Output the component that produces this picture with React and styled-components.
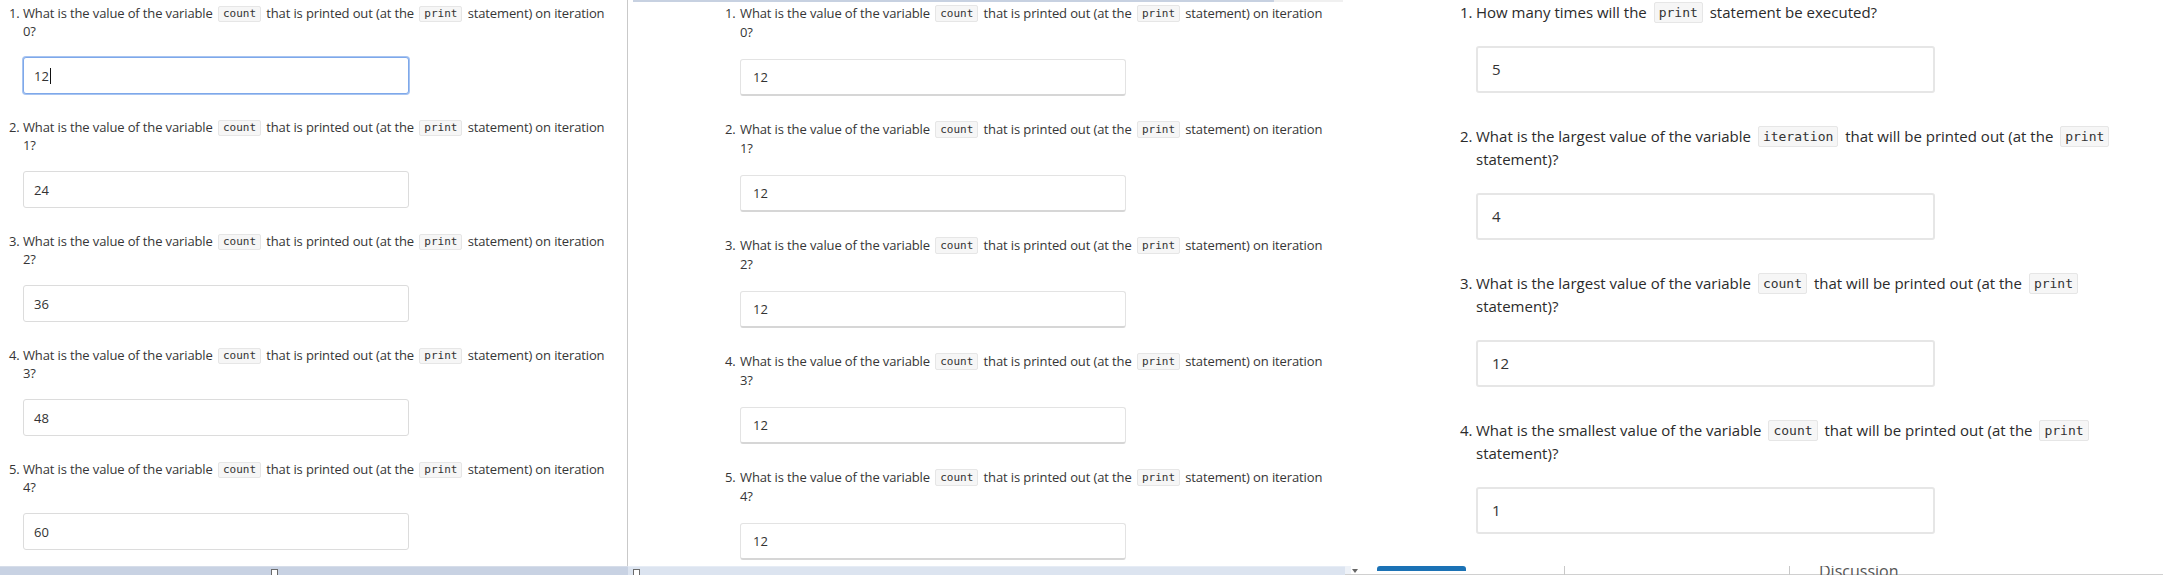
import React from 'react';
import styled, { createGlobalStyle, css } from 'styled-components';

const Global = createGlobalStyle`
  html, body { margin: 0; padding: 0; background: #fff; }
  body {
    width: 2163px; height: 575px; overflow: hidden;
    font-family: "Open Sans", "Noto Sans", sans-serif;
    color: #333;
  }
  #root { width: 2163px; height: 575px; }
`;

const V = {
  left: { padLeft: 9, padTop: 4, numW: 14, fs: 13, lh: 18, ls: -0.13, textW: 600, qToInput: 17, inputW: 386, inputH: 37, after: 24, inPad: 10, codeFs: 11, codeLh: 14, codePad: 4, codeM: 2 },
  mid: { padLeft: 97, padTop: 2, numW: 15, fs: 13, lh: 19, ls: -0.12, textW: 600, qToInput: 17, inputW: 386, inputH: 37, after: 24, inPad: 12, codeFs: 11, codeLh: 15, codePad: 4, codeM: 2 },
  right: { padLeft: 117, padTop: 1, numW: 16, fs: 15, lh: 23, ls: 0, textW: 664, qToInput: 22, inputW: 459, inputH: 47, after: 32, inPad: 14, codeFs: 13, codeLh: 19, codePad: 4, codeM: 3 },
};

const Page = styled.div`
  display: flex;
  flex-direction: column;
  width: 2163px;
  height: 575px;
  overflow: hidden;
`;

const Panels = styled.div`
  display: flex;
  height: 566px;
  flex: 0 0 566px;
`;

const Panel = styled.section`
  flex: 0 0 ${p => p.$w}px;
  box-sizing: border-box;
  display: flex;
  flex-direction: column;
  overflow: hidden;
  ${p => p.$divider && css`border-right: 1px solid #c9c9c9;`}
`;

const TopStrip = styled.div`
  display: flex;
  height: 2px;
  flex: 0 0 2px;
  margin-left: 5px;
`;

const StripPart = styled.div`
  height: 2px;
  background: ${p => p.$c};
  flex: ${p => (p.$w ? `0 0 ${p.$w}px` : '1 1 auto')};
`;

const List = styled.ol`
  list-style: none;
  margin: 0;
  padding: ${p => V[p.$v].padTop}px 0 0 ${p => V[p.$v].padLeft}px;
  display: flex;
  flex-direction: column;
`;

const Item = styled.li`
  display: grid;
  grid-template-columns: ${p => V[p.$v].numW}px ${p => V[p.$v].textW}px;
  font-size: ${p => V[p.$v].fs}px;
  line-height: ${p => V[p.$v].lh}px;
  letter-spacing: ${p => V[p.$v].ls}px;
  color: ${p => (p.$v === 'right' ? '#2b2b2b' : '#363636')};
  margin-bottom: ${p => V[p.$v].after}px;
`;

const Num = styled.span``;

const Body = styled.div`
  display: flex;
  flex-direction: column;
  gap: ${p => V[p.$v].qToInput}px;
`;

const Prompt = styled.div`
  ${p => p.$nowrap && css`white-space: nowrap;`}
`;

const Code = styled.code`
  font-family: "DejaVu Sans Mono", "Liberation Mono", monospace;
  font-size: ${p => V[p.$v].codeFs}px;
  line-height: ${p => V[p.$v].codeLh}px;
  letter-spacing: 0;
  display: inline-block;
  padding: 0 ${p => V[p.$v].codePad}px;
  margin: 0 ${p => V[p.$v].codeM}px;
  background: #f6f6f6;
  border: 1px solid #e6e6e6;
  border-radius: 2px;
  color: #333;
  vertical-align: 1px;
`;

const Answer = styled.div`
  box-sizing: border-box;
  width: ${p => V[p.$v].inputW}px;
  height: ${p => V[p.$v].inputH}px;
  display: flex;
  align-items: center;
  padding-left: ${p => V[p.$v].inPad}px;
  background: #fff;
  border-radius: 3px;
  font-size: ${p => V[p.$v].fs}px;
  letter-spacing: 0;
  color: #333;
  ${p => p.$v === 'left' && css`border: 1px solid #dcdcdc;`}
  ${p => p.$v === 'mid' && css`border: 1px solid #e3e3e3; border-bottom: 2px solid #d6d6d6;`}
  ${p => p.$v === 'right' && css`border: 2px solid #e6e6e6;`}
  ${p => p.$focus && css`
    border: 1px solid #7ea8ea;
    box-shadow: 0 0 0 1px #a7c4f1;
  `}
`;

const Caret = styled.span`
  display: inline-block;
  width: 1px;
  height: 16px;
  background: #111;
  margin-left: 1px;
`;

/* bottom strip */
const Bottom = styled.div`
  display: flex;
  height: 9px;
  flex: 0 0 9px;
  overflow: hidden;
`;

const BarSeg = styled.div`
  position: relative;
  flex: 0 0 ${p => p.$w}px;
  height: 9px;
  box-sizing: border-box;
  background: ${p => p.$c};
  border-top: 1px solid ${p => p.$top};
`;

const Handle = styled.span`
  position: absolute;
  left: ${p => p.$x}px;
  top: 2px;
  width: 5px;
  height: 5px;
  background: #fff;
  border: 1px solid #6b6b6b;
`;

const Tail = styled.div`
  flex: 1 1 auto;
  display: flex;
  align-items: flex-start;
  height: 9px;
  border-bottom: 1px solid #d0d0d0;
  box-sizing: border-box;
  background: linear-gradient(to right, #eef2f8 0, #eef2f8 6px, #fff 6px);
`;

const Arrow = styled.span`
  margin-left: 7px;
  margin-top: 3px;
  width: 0;
  height: 0;
  border-left: 3px solid transparent;
  border-right: 3px solid transparent;
  border-top: 4px solid #666;
`;

const TabBar = styled.span`
  margin-left: 19px;
  width: 89px;
  height: 5px;
  background: #1b72b5;
  border-radius: 3px 3px 0 0;
`;

const Tick = styled.span`
  margin-left: ${p => p.$m}px;
  width: 1px;
  height: 9px;
  background: #c8c8c8;
`;

const Discussion = styled.span`
  margin-left: 29px;
  margin-top: -3px;
  font-family: "Open Sans", sans-serif;
  font-size: 16px;
  line-height: 16px;
  color: #555;
`;

const leftVals = ['12', '24', '36', '48', '60'];
const midVals = ['12', '12', '12', '12', '12'];

function IterationPrompt({ v, n }) {
  return (
    <Prompt $nowrap>
      What is the value of the variable <Code $v={v}>count</Code> that is printed out (at the{' '}
      <Code $v={v}>print</Code> statement) on iteration
      <br />
      {n}?
    </Prompt>
  );
}

function IterationPanel({ v, values, focusFirst }) {
  return (
    <List $v={v}>
      {values.map((val, i) => (
        <Item key={i} $v={v}>
          <Num>{i + 1}.</Num>
          <Body $v={v}>
            <IterationPrompt v={v} n={i} />
            <Answer $v={v} $focus={focusFirst && i === 0} role="textbox">
              {val}
              {focusFirst && i === 0 && <Caret />}
            </Answer>
          </Body>
        </Item>
      ))}
    </List>
  );
}

const rightQs = [
  { q: v => (<>How many times will the <Code $v={v}>print</Code> statement be executed?</>), a: '5' },
  { q: v => (<>What is the largest value of the variable <Code $v={v}>iteration</Code> that will be printed out (at the <Code $v={v}>print</Code> statement)?</>), a: '4' },
  { q: v => (<>What is the largest value of the variable <Code $v={v}>count</Code> that will be printed out (at the <Code $v={v}>print</Code> statement)?</>), a: '12' },
  { q: v => (<>What is the smallest value of the variable <Code $v={v}>count</Code> that will be printed out (at the <Code $v={v}>print</Code> statement)?</>), a: '1' },
];

export default function App() {
  return (
    <Page>
      <Global />
      <Panels>
        <Panel $w={628} $divider>
          <IterationPanel v="left" values={leftVals} focusFirst />
        </Panel>
        <Panel $w={715}>
          <TopStrip>
            <StripPart $c="#c7d1e1" $w={641} />
            <StripPart $c="#f0f0f0" />
          </TopStrip>
          <IterationPanel v="mid" values={midVals} />
        </Panel>
        <Panel $w={820}>
          <List $v="right">
            {rightQs.map((item, i) => (
              <Item key={i} $v="right">
                <Num>{i + 1}.</Num>
                <Body $v="right">
                  <Prompt>{item.q('right')}</Prompt>
                  <Answer $v="right" role="textbox">{item.a}</Answer>
                </Body>
              </Item>
            ))}
          </List>
        </Panel>
      </Panels>
      <Bottom>
        <BarSeg $w={628} $c="#c8d2e3" $top="#d6dde9">
          <Handle $x={271} />
        </BarSeg>
        <BarSeg $w={717} $c="#dce4f0" $top="#e6ecf5">
          <Handle $x={5} />
        </BarSeg>
        <Tail>
          <Arrow />
          <TabBar />
          <Tick $m={98} />
          <Tick $m={224} />
          <Discussion>Discussion</Discussion>
        </Tail>
      </Bottom>
    </Page>
  );
}
